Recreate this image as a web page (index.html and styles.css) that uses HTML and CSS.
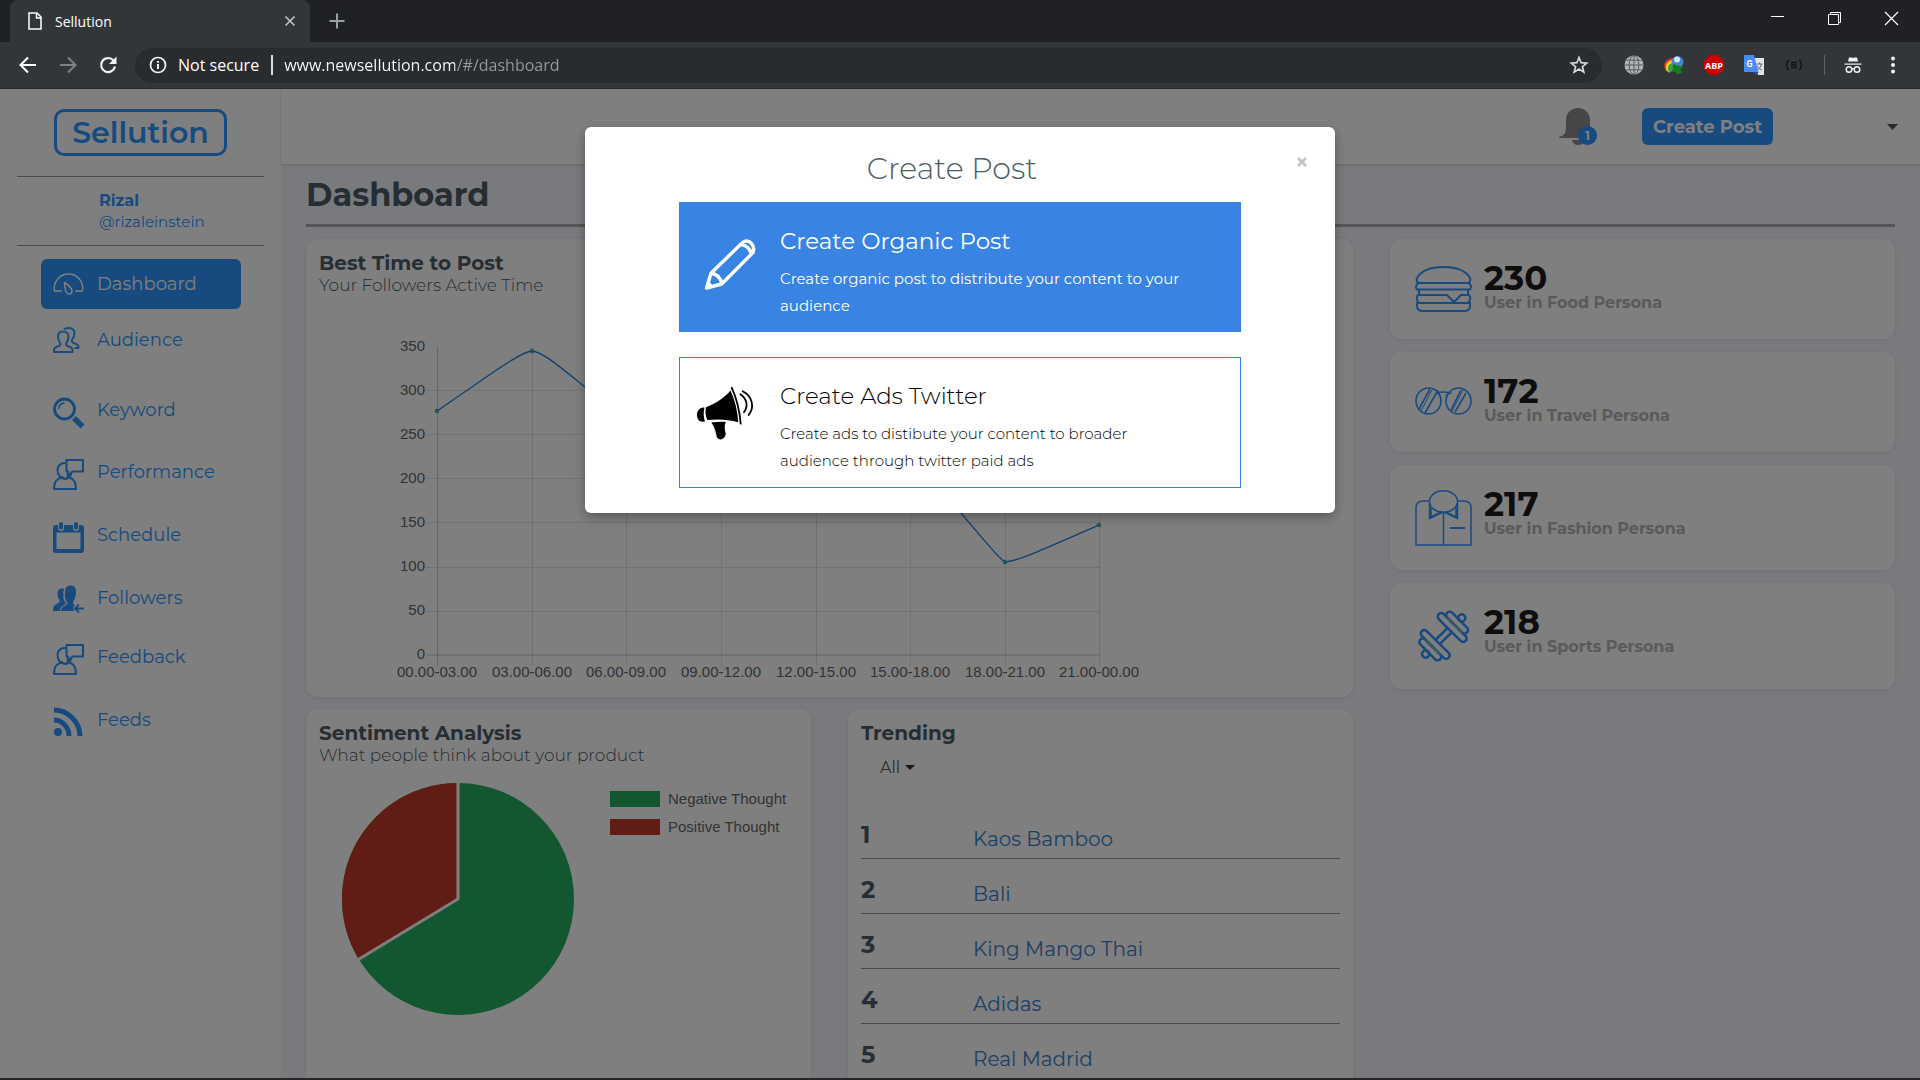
FILE: index.html
```html
<!DOCTYPE html>
<html lang="en">
<head>
<meta charset="utf-8">
<meta name="viewport" content="width=device-width, initial-scale=1">
<title>Sellution</title>
<link rel="stylesheet" href="styles.css">
</head>
<body>
<div class="browser">
  <div class="tabstrip">
    <div class="tab">
      <svg class="tab-icon" width="14" height="18" viewBox="0 0 14 18" fill="none" stroke="#fff" stroke-width="1.5"><path d="M1 1h8l4 4v12H1zM8.500 1v5H13"/></svg>
      <span class="tab-title">Sellution</span>
      <button class="icon-btn" aria-label="Close tab"><svg width="12" height="12" viewBox="0 0 12 12" stroke="#bdc1c6" stroke-width="1.700"><path d="M1.500 1.500l9 9M10.500 1.500l-9 9"/></svg></button>
    </div>
    <button class="icon-btn new-tab" aria-label="New tab"><svg width="16" height="16" viewBox="0 0 16 16" stroke="#9aa0a6" stroke-width="2"><path d="M8 0.500v15M0.500 8h15"/></svg></button>
    <div class="window-controls">
      <button class="icon-btn" aria-label="Minimize"><svg width="13" height="13" viewBox="0 0 13 13" stroke="#fff"><path d="M0 4.500h13"/></svg></button>
      <button class="icon-btn" aria-label="Restore"><svg width="13" height="13" viewBox="0 0 13 13" fill="none" stroke="#fff"><path d="M0.500 2.500h10v10h-10zM2.500 2.500v-2h10v10h-2"/></svg></button>
      <button class="icon-btn" aria-label="Close"><svg width="13" height="13" viewBox="0 0 13 13" stroke="#fff" stroke-width="1.200"><path d="M0 0l13 13M13 0L0 13"/></svg></button>
    </div>
  </div>
  <div class="toolbar">
    <button class="icon-btn" aria-label="Back"><svg width="18" height="18" viewBox="0 0 18 18" fill="none" stroke="#fff" stroke-width="2"><path d="M17 9H2M9 1.500L1.500 9 9 16.500"/></svg></button>
    <button class="icon-btn" aria-label="Forward"><svg width="18" height="18" viewBox="0 0 18 18" fill="none" stroke="#7d8184" stroke-width="2"><path d="M1 9h15M9 1.500L16.500 9 9 16.500"/></svg></button>
    <button class="icon-btn" aria-label="Reload"><svg width="18" height="18" viewBox="0 0 18 18"><path d="M14.500 4.500A7 7 0 1 0 16 10.500" fill="none" stroke="#f1f3f4" stroke-width="2.200"/><path d="M17.500 0.500v7.500H10z" fill="#f1f3f4"/></svg></button>
    <div class="address">
      <svg width="18" height="18" viewBox="0 0 18 18" fill="none" stroke="#f1f3f4" stroke-width="1.700"><circle cx="9" cy="9" r="7.500"/><path d="M9 8v5M9 5v1.800" stroke-width="2"/></svg>
      <label class="secure" for="url">Not secure</label>
      <input class="url" id="url" type="text" value="www.newsellution.com/#/dashboard">
      <button class="icon-btn" aria-label="Bookmark"><svg width="18" height="18" viewBox="0 0 18 18" fill="none" stroke="#d5d8db" stroke-width="1.700"><path d="M9 1.500l2.100 5.200 5.600.4-4.300 3.600 1.400 5.400L9 13.100l-4.800 3 1.400-5.400L1.300 7.100l5.600-.4z"/></svg></button>
    </div>
    <div class="extensions">
      <svg width="20" height="20" viewBox="0 0 20 20" fill="none"><circle cx="10" cy="10" r="9.500" fill="#b4b4b4"/><g stroke="#555a5d" stroke-width="1"><ellipse cx="10" cy="10" rx="4.800" ry="9.500"/><path d="M10 .5v19M.5 10h19M2.500 5.200h15M2.500 14.800h15"/></g></svg>
      <svg width="20" height="20" viewBox="0 0 20 20"><path d="M2 16C-2 10 1 3 10 3l-1 4C5 7 3 11 5 17z" fill="#e0322b"/><path d="M3 16C0 11 3 5 10 5l-1 4c-4 0-5 4-3 9z" fill="#f5d21f"/><path d="M5 17C2 12 5 8 10 8l1 5-4 4z" fill="#3aa441"/><circle cx="13.500" cy="7" r="6" fill="#4a84cc"/><circle cx="13" cy="4.500" r="3" fill="#cde8fa"/><path d="M9 9l10 3-2.500 2.500 2 3-5 2-2-3-3 1z" fill="#14801c"/></svg>
      <svg width="20" height="20" viewBox="0 0 20 20"><path d="M6 0h8l6 6v8l-6 6H6l-6-6V6z" fill="#cf0000"/><text x="10" y="13.500" text-anchor="middle" class="abp">ABP</text></svg>
      <svg width="20" height="20" viewBox="0 0 20 20"><path d="M8 3h12v17h-6z" fill="#e4e4e4"/><path d="M0 0h10l4.500 17H0z" fill="#4c8bf5"/><path d="M10 17h4.500L13.500 20z" fill="#3050c0"/><text x="5.500" y="11.500" text-anchor="middle" class="gt">G</text><path d="M12.500 9h6M15.500 7.500V9M13.500 15c2-1 3.500-3 3.800-6M13.500 11c1 2 2 3 4.500 4" fill="none" stroke="#5f6a70"/></svg>
      <svg width="20" height="20" viewBox="0 0 20 20" fill="none" stroke="#0f1011" stroke-width="1.300"><path d="M5 5.500c-3 0-1 4-3 4.500 2 .5 0 4.500 3 4.500M15 5.500c3 0 1 4 3 4.500-2 .5 0 4.500-3 4.500M7 7.500h6M7 10h6M7 12.500h6"/></svg>
      <span class="rule"></span>
      <svg width="16" height="18" viewBox="1 0 16 18"><path d="M5 1.500h2.500L9 2l1.500-.5H13l1 4H4z" fill="#f1f3f4"/><path d="M0.500 7.500h17v1.200H.5z" fill="#f1f3f4"/><g fill="none" stroke="#f1f3f4" stroke-width="1.400"><circle cx="5" cy="13.500" r="2.800"/><circle cx="13" cy="13.500" r="2.800"/><path d="M7.800 13q1.200-.8 2.400 0"/></g></svg>
      <button class="icon-btn menu" aria-label="Menu"><svg width="4" height="18" viewBox="0 0 4 18" fill="#f1f3f4"><circle cx="2" cy="2.500" r="2"/><circle cx="2" cy="9" r="2"/><circle cx="2" cy="15.500" r="2"/></svg></button>
    </div>
  </div>

  <div class="viewport">
    <div class="app">
      <aside class="sidebar">
        <a class="logo" href="#">Sellution</a>
        <div class="profile"><strong>Rizal</strong><span>@rizaleinstein</span></div>
        <nav class="nav">
          <a class="nav-link active" href="#"><svg width="31" height="22" viewBox="0 0 31 22" fill="none" stroke="currentColor" stroke-width="1.500" stroke-linejoin="round"><path d="M9 18H1.500C0 9 6.500 1 15.500 1S31 9 29.500 18H22"/><path d="M11.500 9.500c4 2.500 7.500 5 7.500 8.500 0 2-1.300 3-3 3-3 0-4.300-5.500-4.500-11.500z"/></svg>Dashboard</a>
          <a class="nav-link roomy" href="#"><svg width="31" height="26" viewBox="0 0 31 26" fill="none" stroke="currentColor" stroke-width="2" stroke-linejoin="round"><path d="M1 25v-2.500c0-1.500 2-2.500 4.500-3.500 2-.8 2.500-1.800 1.500-3C5.500 14 5 12 5 9.500 5 6.500 7 4.500 10 4.500s5.500 2 5.500 5c0 2.500-.8 4.500-2 6.500-1 1.200-.5 2.200 1 3 3 1 5 2 5 3.500V25z"/><path d="M11 2.500C12 1.500 13.500 1 15.500 1c3.500 0 6 2 6 5.500 0 2.500-1 4.500-2.200 6-1 1.500-.5 2.500 1.200 3.500 3.500 1 5 2 5 3.500V21h-4"/></svg>Audience</a>
          <a class="nav-link" href="#"><svg width="31" height="30" viewBox="0 0 31 30" fill="none" stroke="currentColor"><circle cx="11.500" cy="12" r="10" stroke-width="2.800"/><path d="M5.500 12c0-3 2.500-6 6-6" stroke-width="1.500"/><path d="M21 21l8.500 8.500" stroke-width="5.500"/></svg>Keyword</a>
          <a class="nav-link" href="#"><svg width="31" height="31" viewBox="0 0 31 31"><use href="#person-talk"/></svg>Performance</a>
          <a class="nav-link" href="#"><svg width="31" height="31" viewBox="0 0 31 31" fill="currentColor"><path fill-rule="evenodd" d="M3 3h2v3a3 3 0 0 0 6 0V3h9v3a3 3 0 0 0 6 0V3h2q3 0 3 3v22q0 3-3 3H3q-3 0-3-3V6q0-3 3-3zM3.500 10.500v16.500h24V10.500z"/><rect x="6" y="0" width="4" height="7.500" rx="2"/><rect x="21" y="0" width="4" height="7.500" rx="2"/></svg>Schedule</a>
          <a class="nav-link" href="#"><svg width="31" height="27" viewBox="0 0 31 27" fill="currentColor"><path d="M7 26c0-5 5-5 6-8-2-2-3-5-2.500-8 0-2-.5-4 1-6C7 2.500 4 5 4.500 9c0 2.500.5 4 2 6 1 2-1 3-3 4C1 20 0 22 0 26z"/><path d="M8 26c0-5 6-5 6.500-8C12 15.500 11.500 12 12 7c.5-4.500 2-6.500 5.500-6.500S23 2.500 23 6.500s-1 8-3 10.500c-.5 2 .5 2.500 2 3-2 2-2 3-1 6z"/><path d="M31 23.500h-8M26 19.500l-4 4 4 4" fill="none" stroke="currentColor" stroke-width="1.800"/></svg>Followers</a>
          <a class="nav-link" href="#"><svg width="31" height="31" viewBox="0 0 31 31"><g id="person-talk" fill="none" stroke="currentColor" stroke-width="2" stroke-linejoin="round"><path d="M1 30c0-8 3-10 8-12 2 2 5 2 7 0 4 2 7 4 7 12z"/><path d="M12.500 4C7 3.500 4.500 7.500 4.500 11c0 5 3.500 9 7.500 9 3.500 0 5.500-2.500 6.500-6"/><path d="M13.500 1H30v11.500H19.500L14.500 17l.5-4.500h-1.500z"/></g></svg>Feedback</a>
          <a class="nav-link" href="#"><svg width="31" height="29" viewBox="0 0 31 29" fill="none" stroke="currentColor" stroke-width="5"><circle cx="5" cy="25" r="4" fill="currentColor" stroke="none"/><path d="M1 13c8 0 15 7 15 16"/><path d="M1 3c14 0 26 12 26 26"/></svg>Feeds</a>
        </nav>
      </aside>

      <div class="page">
        <header class="topbar">
          <button class="bell" aria-label="Notifications"><svg width="38" height="37" viewBox="0 0 38 37" fill="#8c8c8c"><path d="M0 29c6-2 7-4 7-11v-6C7 5 12 0 19 0s12 5 12 12v6c0 7 1 9 7 11v1H0z"/><path d="M13 32h12q-1 5-6 5t-6-5z"/></svg><span class="badge">1</span></button>
          <button class="create">Create Post</button>
          <button class="icon-btn" aria-label="Account menu"><svg width="11" height="6" viewBox="0 0 11 6" fill="#555"><path d="M0 0h11L5.500 6z"/></svg></button>
        </header>
        <main class="content">
          <h1>Dashboard</h1>
          <div class="grid">
            <div class="left">
              <section class="card chart-card">
                <h2>Best Time to Post</h2>
                <p class="sub">Your Followers Active Time</p>
                <svg class="line-chart" width="810" height="352" viewBox="-1 0 810 352">
                  <g stroke="#000" stroke-opacity="0.100"><path d="M106 85.500h674M106 129.500h674M106 173.500h674M106 217.500h674M106 262.500h674M106 306.500h674M212.500 41v320M306.500 41v320M401.500 41v320M496.500 41v320M590.500 41v320M685.500 41v320M779.500 41v320"/><path d="M106 350h674M117.500 41v320" stroke-opacity="0.200"/></g>
                  <path d="M117 106L162 75C185 59 203 47 212 46 223 47 240 62 265 82S290 102 306 115S370 180 401 190 470 150 496 150 560 150 590 162S672 250 685 257C698 256 720 246 779 220" fill="none" stroke="#1f7fdc" stroke-width="1.300"/>
                  <g fill="none" stroke="#2ea8a8" stroke-width="1.500"><circle cx="117" cy="106" r="1.500"/><circle cx="212" cy="46" r="1.500"/><circle cx="685" cy="257" r="1.500"/><circle cx="779" cy="220" r="1.500"/></g>
                  <g class="tick" text-anchor="end"><text x="105" y="46">350</text><text x="105" y="90">300</text><text x="105" y="134">250</text><text x="105" y="178">200</text><text x="105" y="222">150</text><text x="105" y="266">100</text><text x="105" y="310">50</text><text x="105" y="354">0</text></g>
                  <g class="tick" text-anchor="middle"><text x="117" y="372">00.00-03.00</text><text x="212" y="372">03.00-06.00</text><text x="306" y="372">06.00-09.00</text><text x="401" y="372">09.00-12.00</text><text x="496" y="372">12.00-15.00</text><text x="590" y="372">15.00-18.00</text><text x="685" y="372">18.00-21.00</text><text x="779" y="372">21.00-00.00</text></g>
                </svg>
              </section>
              <section class="card lower">
                <h2>Sentiment Analysis</h2>
                <p class="sub">What people think about your product</p>
                <div class="pie-row">
                  <svg width="234" height="234" viewBox="-117 -117 234 234"><circle r="116" fill="#27ae60"/><path d="M0 0V-116A116 116 0 0 0 -99.200 60.200Z" fill="#c0392b"/><path d="M0-117V0L-100 60.800" fill="none" stroke="#fff" stroke-width="3"/></svg>
                  <ul class="legend"><li><i class="neg"></i>Negative Thought</li><li><i class="pos"></i>Positive Thought</li></ul>
                </div>
              </section>
              <section class="card lower">
                <h2>Trending</h2>
                <div class="filter"><select aria-label="Category"><option>All</option></select><svg width="10" height="5" viewBox="0 0 10 5" fill="#333"><path d="M0 0h10L5 5z"/></svg></div>
                <ol class="trends">
                  <li><b>1</b><a href="#">Kaos Bamboo</a></li>
                  <li><b>2</b><a href="#">Bali</a></li>
                  <li><b>3</b><a href="#">King Mango Thai</a></li>
                  <li><b>4</b><a href="#">Adidas</a></li>
                  <li><b>5</b><a href="#">Real Madrid</a></li>
                </ol>
              </section>
            </div>
            <div class="personas">
              <section class="card persona"><svg width="57" height="50" viewBox="0 0 57 50" fill="none" stroke="currentColor" stroke-width="2" stroke-linejoin="round"><path d="M4 19C2 18 1 16 2 14 6 7 16 3 28.500 3S51 7 55 14c1 2 0 4-2 5v0c3 1 4 4 2 6.500H2C0 23 1 20 4 19zM4 19h49M4 25.500v5M53 25.500v5M4 30.500c-3 1-3 6 0 8.500M53 30.500c3 1 3 6 0 8.500M4 31h28l7 7 7-7h7M2 39h53v3q0 5-6 5H8q-6 0-6-5z"/></svg><div><strong>230</strong><span>User in Food Persona</span></div></section>
              <section class="card persona"><svg width="57" height="50" viewBox="0 0 57 50" fill="none" stroke="currentColor" stroke-width="1.600"><ellipse cx="13.500" cy="24" rx="12.500" ry="13"/><ellipse cx="43.500" cy="24" rx="12.500" ry="13"/><path d="M25 19q-1-3-4-3 7-2 14 0-3 1-4 3M4 32l11-20M10 36l13-23M36 33l10-20M40 35l11-19"/><path d="M6 34l11-21M37 34l11-21" stroke-width="1"/></svg><div><strong>172</strong><span>User in Travel Persona</span></div></section>
              <section class="card persona"><svg width="57" height="55" viewBox="0 0 57 55" fill="none" stroke="currentColor" stroke-width="1.500"><ellipse cx="28.500" cy="11.500" rx="14" ry="10.700"/><path d="M15 11H8q-7 0-7 7v37h55V18q0-7-7-7h-7M28.500 22v33M14.500 13v15.500L28 22M42.500 13v15.500L29 22M16 18v9l10-5M41 18v9l-10-5"/><path d="M35 38h15" stroke-width="2"/></svg><div><strong>217</strong><span>User in Fashion Persona</span></div></section>
              <section class="card persona"><svg width="57" height="56" viewBox="0 0 57 56" stroke="currentColor" stroke-width="2.500"><g transform="translate(28.700 28) rotate(-45)" fill="none"><path d="M-9-3H9M-9 3H9"/><rect x="-29" y="-3.500" width="7" height="7" rx="3"/><rect x="22" y="-3.500" width="7" height="7" rx="3"/><rect x="-22.500" y="-14" width="7" height="28" rx="3.500"/><rect x="15.500" y="-14" width="7" height="28" rx="3.500"/><rect x="-15.500" y="-19" width="7" height="38" rx="3.500"/><rect x="8.500" y="-19" width="7" height="38" rx="3.500"/><path d="M-15.500-11v22M15.500-11v22" stroke="#6fb4c0" stroke-width="2.500"/></g></svg><div><strong>218</strong><span>User in Sports Persona</span></div></section>
            </div>
          </div>
        </main>
      </div>
    </div>

    <div class="backdrop">
      <div class="modal" role="dialog" aria-labelledby="modal-title">
        <button class="close" aria-label="Close dialog"><svg width="10" height="10" viewBox="0 0 10 10" stroke="#c4c4c4" stroke-width="2.800"><path d="M1 1l8 8M9 1L1 9"/></svg></button>
        <h2 id="modal-title">Create Post</h2>
        <button class="option primary">
          <svg width="60" height="55" viewBox="0 0 60 55" fill="none" stroke="#fff" stroke-width="3.400" stroke-linejoin="round"><path d="M9.500 52L14 37.300 45 7q5-4 9 0t2 9.500L24.700 48zM14 37.300q9 1 10.700 10.700M43.500 8.500q9 1 11 10"/><path d="M9.500 52l2-7 3.500 4.500z" fill="#fff" stroke-width="1"/></svg>
          <span class="option-text"><strong>Create Organic Post</strong><span>Create organic post to distribute your content to your audience</span></span>
        </button>
        <button class="option">
          <svg width="60" height="55" viewBox="0 0 60 55"><path d="M6.500 21.500C2 22 0 25 0 29c0 4.500 2.500 7 6 6.700l2-.2C6.500 31 6.200 27 7.500 21.500zM9 21.300C20 17 28 11 33.500 4.500 38 14 40.500 25 41.300 36.300 31 33 20 33 10.300 34 8.500 30 8 26 9 21.300zM14.300 36.600c5-.6 10-1 14.500-.6-2 4-1 8 0 12-1 6-7 7-9 3-1-5-2-9.500-5.500-14.400z"/><g fill="none" stroke="#000" stroke-width="1.800" stroke-linecap="round"><path d="M34.700 1.700c5 11 8 24 9 36M43.300 8.300c7 5 8 12 3.700 18M45.700 5.300c10 5 12 16 6 23.700"/></g></svg>
          <span class="option-text"><strong>Create Ads Twitter</strong><span>Create ads to distibute your content to broader audience through twitter paid ads</span></span>
        </button>
      </div>
    </div>
  </div>
</div>
</body>
</html>
```
FILE: styles.css
```css
* { box-sizing: border-box; }
body { margin: 0; font-family: Montserrat, Inter, "Open Sans", sans-serif; color: #4c5c66; }
h1, h2, p, ul, ol { margin: 0; padding: 0; }
ul, ol { list-style: none; }
a { text-decoration: none; }
button { font: inherit; padding: 0; border: 0; background: none; cursor: pointer; }
svg { display: block; flex: none; overflow: visible; }

.browser { height: 100vh; display: flex; flex-direction: column; overflow: hidden; border-bottom: 2px solid #262626; }
.icon-btn { display: flex; align-items: center; justify-content: center; }

/* Browser window */
.tabstrip { flex: none; height: 42px; display: flex; align-items: center; padding-left: 10px; background: #202124; }
.tab { width: 300px; height: 42px; display: flex; align-items: center; gap: 13px; padding: 0 14px 0 18px; background: #323639; border-radius: 8px 8px 0 0; color: #fff; font: 14px "Open Sans", "Noto Sans", sans-serif; }
.tab-title { flex: 1; }
.new-tab { margin-left: 19px; }
.window-controls { margin-left: auto; display: flex; gap: 44px; padding: 0 22px 5px 0; }
.toolbar { flex: none; height: 47px; display: flex; align-items: center; gap: 22px; padding: 0 25px 0 19px; background: #323639; border-bottom: 1px solid #25282a; }
.address { flex: 1; height: 35px; display: flex; align-items: center; padding: 0 14px; border-radius: 18px; background: #282c2f; margin-left: -4px; font: 16px "Open Sans", "Noto Sans", sans-serif; color: #fff; }
.secure { margin-left: 11px; padding-right: 12px; border-right: 2px solid #dcdcdc; line-height: 20px; }
.url { flex: 1; min-width: 0; margin-left: 11px; padding: 0; border: 0; outline: 0; font: inherit; color: transparent; background: linear-gradient(90deg, #fff 171px, #969ba0 171px); background-clip: text; -webkit-background-clip: text; }
.extensions { display: flex; align-items: center; gap: 20px; }
.rule { width: 1px; height: 20px; background: #5f6366; }
.menu { margin-left: 10px; }
.abp { font: bold 9px "Open Sans", sans-serif; fill: #fff; }
.gt { font: bold 9px Roboto, sans-serif; fill: #fff; }

/* Application shell */
.viewport { position: relative; flex: 1; min-height: 0; overflow: hidden; }
.app { height: 100%; display: flex; background: #f2f4fc; overflow: hidden; }
.sidebar { flex: none; width: 281px; padding: 20px 17px 0; background: #fff; color: #2e94ff; }
.logo { display: flex; align-items: center; justify-content: center; width: 173px; height: 47px; margin: 0 auto 20px 37px; border: 3px solid #2e94ff; border-radius: 10px; color: #2e94ff; font-size: 30px; font-weight: 600; }
.profile { display: flex; flex-direction: column; height: 70px; padding: 13px 0 0 82px; border: 1px solid #949494; border-width: 1px 0; font-size: 16px; line-height: 21px; }
.profile span { font-size: 15px; }
.nav { display: flex; flex-direction: column; gap: 32px; padding: 13px 23px 0 24px; }
.nav-link { display: flex; align-items: flex-start; gap: 13px; padding-left: 12px; color: #2e94ff; font-size: 18px; line-height: 26px; }
.nav-link.active { align-items: center; height: 50px; margin-bottom: -14px; border-radius: 6px; background: #2e94ff; color: #fff; }
.nav-link.roomy { min-height: 38px; }

.page { flex: 1; min-width: 0; }
.topbar { height: 75px; display: flex; align-items: center; justify-content: flex-end; padding: 0 22px 0 0; background: #fff; box-shadow: 0 1px 3px rgba(0, 0, 0, 0.150); }
.bell { position: relative; margin-right: 45px; }
.badge { position: absolute; right: 0; bottom: 0; width: 19px; height: 19px; border-radius: 50%; background: #2e94ff; color: #fff; font-size: 12px; font-weight: 700; line-height: 19px; text-align: center; }
.create { width: 131px; height: 37px; margin-right: 114px; border-radius: 6px; background: #2e94ff; color: #fff; font-size: 18px; font-weight: 700; white-space: nowrap; }
.content { padding: 0 25px; }
h1 { height: 63px; padding-top: 11px; border-bottom: 3px solid #aaa; font-size: 32px; line-height: 40px; font-weight: 700; }
.grid { display: grid; grid-template-columns: repeat(3, minmax(0, 1fr)); gap: 37px; padding-top: 12px; }
.left { grid-column: span 2; display: grid; grid-template-columns: 1fr 1fr; gap: 12px 37px; }
.card { background: #fff; border-radius: 12px; box-shadow: 0 1px 4px rgba(0, 0, 0, 0.080); }
.card h2 { font-size: 20px; line-height: 24px; font-weight: 700; }
.sub { font-size: 17px; line-height: 20px; font-weight: 300; }
.chart-card { grid-column: span 2; height: 458px; padding: 12px 13px; }
.line-chart { margin-top: 10px; }
.tick { font: 15px "Liberation Sans", Arial, sans-serif; fill: #666; }
.lower { min-height: 430px; padding: 12px 13px; }
.pie-row { display: flex; align-items: flex-start; gap: 35px; padding: 17px 0 0 22px; }
.legend { padding-top: 3px; font: 15px/28px "Liberation Sans", Arial, sans-serif; color: #666; white-space: nowrap; }
.legend li { display: flex; align-items: center; gap: 8px; }
.legend i { width: 50px; height: 16px; }
.neg { background: #27ae60; }
.pos { background: #c0392b; }
.filter { display: flex; align-items: center; gap: 4px; height: 44px; padding-left: 19px; }
.filter select { appearance: none; border: 0; padding: 0; background: none; font: 16px Montserrat, Inter, sans-serif; color: #555; }
.trends { padding-top: 15px; }
.trends li { display: flex; align-items: center; height: 55px; padding-top: 7px; border-bottom: 1px solid #949494; font-size: 24px; }
.trends b { width: 112px; }
.trends a { padding-top: 8px; color: #3a82c8; font-size: 20px; }
.personas { display: flex; flex-direction: column; gap: 13px; }
.persona { display: flex; gap: 12px; padding: 25px; color: #2e94ff; }
.persona div { display: flex; flex-direction: column; margin-top: -3px; height: 53px; }
.persona strong { color: #1d1d1d; font-size: 34px; line-height: 34px; }
.persona span { color: #b4b4b4; font-size: 16px; line-height: 16px; font-weight: 700; }

/* Dialog */
.backdrop { position: absolute; inset: 0; padding: 38px 20px; background: rgba(0, 0, 0, 0.500); }
.modal { position: relative; max-width: 750px; margin: 0 auto; padding: 22px 94px 25px; border-radius: 6px; background: #fff; box-shadow: 0 4px 12px rgba(0, 0, 0, 0.300); }
.modal h2 { margin-bottom: 13px; padding-right: 16px; font-size: 30px; line-height: 40px; font-weight: 300; text-align: center; }
.close { position: absolute; top: 30px; right: 28px; }
.option { display: flex; align-items: flex-start; width: 100%; gap: 23px; padding: 24px 40px 13px 17px; border: 1px solid #3983e2; color: #000; font-size: 15px; line-height: 27px; font-weight: 300; text-align: left; }
.option svg { margin-top: 4px; }
.option-text { display: flex; flex-direction: column; gap: 10px; }
.option strong { font-size: 23px; line-height: 28px; font-weight: inherit; }
.option.primary { margin-bottom: 25px; padding-bottom: 12px; background: #3983e2; color: #fff; font-weight: 400; }
.option.primary svg { margin-top: 9px; }
```
